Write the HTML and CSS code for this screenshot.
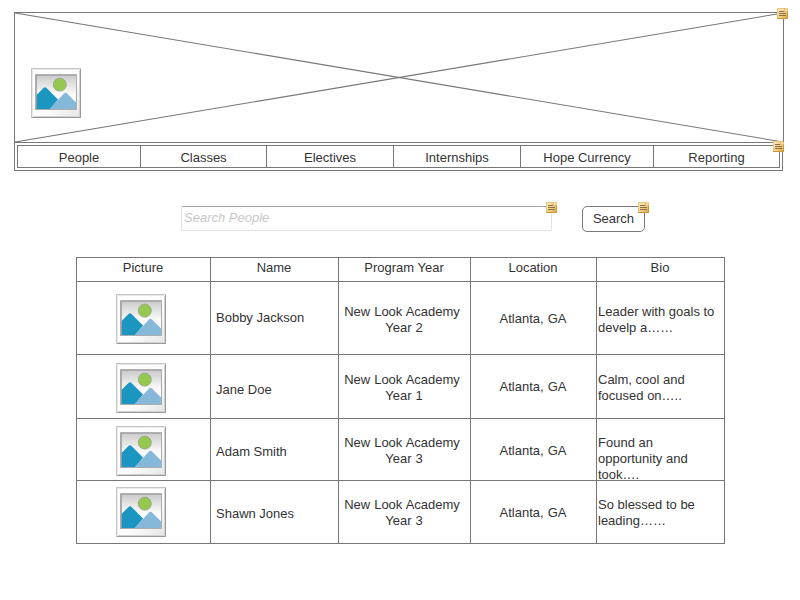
FILE: index.html
```html
<!DOCTYPE html>
<html lang="en">
<head>
<meta charset="utf-8">
<title>People</title>
<link rel="stylesheet" href="styles.css">
</head>
<body>
<svg class="defs" width="0" height="0" aria-hidden="true">
  <defs>
    <linearGradient id="frame" x1="0" y1="0" x2="1" y2="1"><stop offset="0" stop-color="#fff"/><stop offset=".6" stop-color="#fcfcfc"/><stop offset="1" stop-color="#e4e4e4"/></linearGradient>
    <linearGradient id="sky" x1="0" y1="0" x2="0" y2="1"><stop offset="0" stop-color="#c9c9cb"/><stop offset=".55" stop-color="#fafafa"/><stop offset="1" stop-color="#fff"/></linearGradient>
    <linearGradient id="paper" x1="0" y1="0" x2="1" y2="1"><stop offset="0" stop-color="#fdf0cf"/><stop offset=".5" stop-color="#f3d28c"/><stop offset="1" stop-color="#d9a23f"/></linearGradient>
    <symbol id="picture" viewBox="0 0 50 50">
      <rect x=".5" y=".5" width="49" height="49" fill="url(#frame)" stroke="#c6c6c6"/>
      <path d="M1.500 48V1.500H48" fill="none" stroke="#e9e9e9"/>
      <path d="M48.500 2V48.500H2" fill="none" stroke="#d2d2d2"/>
      <path d="M49.500 1V49.500H1" fill="none" stroke="#999"/>
      <rect x="4.500" y="6.500" width="41" height="35" fill="url(#sky)"/>
      <circle cx="28.800" cy="16.600" r="6.500" fill="#95c84e" stroke="#9eaa91"/>
      <path d="M5 27.500 12.500 20Q14 18.500 15.500 20L27 31.500 19 41.500H5Z" fill="#1b96c0"/>
      <path d="M18 41.500 33 25.500Q34.500 24 36 25.500L45.500 35V41.500Z" fill="#86b8d9"/>
      <path d="M5 42V7H46" fill="none" stroke="#a0a0a2" stroke-width="1.700"/>
      <path d="M45.500 7V41.500H4" fill="none" stroke="#aaadaf"/>
    </symbol>
    <symbol id="note" viewBox="0 0 11 11">
      <path d="M0 0H8L11 3V11H0Z" fill="url(#paper)"/>
      <path d="M.5 11V.5H8" fill="none" stroke="#ebc47b"/>
      <path d="M0 10.500H10.500V3" fill="none" stroke="#cf9636"/>
      <path d="M7.500 0V3.500H11L10.500 .5Z" fill="#f8dfa3" stroke="#d9aa58" stroke-width=".6"/>
      <path d="M2 3.500H7M2 5.500H9M2 7.500H9" stroke="#8b7043"/>
    </symbol>
  </defs>
</svg>

<div class="top">
  <header class="banner">
    <svg class="cross" viewBox="0 0 768 129" preserveAspectRatio="none"><path d="M0 0 768 129M0 129 768 0"/></svg>
    <svg class="picture logo"><use href="#picture"/></svg>
    <svg class="note"><use href="#note"/></svg>
  </header>
  <nav class="menu">
    <div class="items">
      <a>People</a><a>Classes</a><a>Electives</a><a>Internships</a><a>Hope Currency</a><a>Reporting</a>
    </div>
    <svg class="note menu-note"><use href="#note"/></svg>
  </nav>
</div>

<div class="search">
  <div class="field"><input type="text" placeholder="Search People"><svg class="note"><use href="#note"/></svg></div>
  <div class="action"><button>Search</button><svg class="note"><use href="#note"/></svg></div>
</div>

<main class="people">
  <div class="row head"><div>Picture</div><div>Name</div><div>Program Year</div><div>Location</div><div>Bio</div></div>
  <div class="row first">
    <div class="pic"><svg class="picture"><use href="#picture"/></svg></div>
    <div class="name">Bobby Jackson</div>
    <div class="program">New Look Academy&nbsp;<br>Year 2</div>
    <div class="place">Atlanta, GA</div>
    <div class="bio">Leader with goals to<br>develp a……</div>
  </div>
  <div class="row second">
    <div class="pic"><svg class="picture"><use href="#picture"/></svg></div>
    <div class="name">Jane Doe</div>
    <div class="program">New Look Academy&nbsp;<br>Year 1</div>
    <div class="place">Atlanta, GA</div>
    <div class="bio">Calm, cool and<br>focused on…..</div>
  </div>
  <div class="row third">
    <div class="pic"><svg class="picture"><use href="#picture"/></svg></div>
    <div class="name">Adam Smith</div>
    <div class="program">New Look Academy&nbsp;<br>Year 3</div>
    <div class="place">Atlanta, GA</div>
    <div class="bio">Found an<br>opportunity and<br>took….</div>
  </div>
  <div class="row fourth">
    <div class="pic"><svg class="picture"><use href="#picture"/></svg></div>
    <div class="name">Shawn Jones</div>
    <div class="program">New Look Academy&nbsp;<br>Year 3</div>
    <div class="place">Atlanta, GA</div>
    <div class="bio">So blessed to be<br>leading……</div>
  </div>
</main>
</body>
</html>
```
FILE: styles.css
```css
* { box-sizing: border-box; }
body {
  margin: 0;
  padding: 12px 0 0 14px;
  background: #fff;
  color: #333;
  font: 13px/16px "Liberation Sans", Arial, sans-serif;
}
svg { display: block; }
.defs { position: absolute; }
.picture { width: 50px; height: 50px; }
.note { position: absolute; width: 11px; height: 11px; top: -4px; right: -6px; }

.banner {
  position: relative;
  width: 770px;
  height: 131px;
  padding: 55px 0 0 16px;
  border: 1px solid #777;
}
.cross { position: absolute; inset: 0; width: 768px; height: 129px; }
.cross path { fill: none; stroke: #777; stroke-width: 1.1; }
.logo { position: relative; }
.banner .note { top: -5px; right: -5px; }

.menu {
  position: relative;
  width: 769px;
  height: 28px;
  padding: 2px;
  border: 1px solid #777;
  border-top: 0;
}
.items {
  display: grid;
  grid-template-columns: 123px 126px 127px 127px 133px 126px;
  width: 763px;
  height: 23px;
  border: 1px solid #777;
  border-right: 0;
}
.items a { padding-top: 4px; border-right: 1px solid #777; text-align: center; }
.menu .menu-note { top: -2px; right: -2px; }

.search { display: flex; gap: 30px; margin: 35px 0 0 167px; }
.field, .action { position: relative; }
.field { width: 371px; }
.field input {
  display: block;
  width: 371px;
  height: 25px;
  padding: 0 2px 3px;
  border: 1px solid #dde3e3;
  border-top-color: #a5a5a5;
  border-radius: 2px;
  font: inherit;
  outline: 0;
}
.field input::placeholder { color: #c8c8c8; font-style: italic; opacity: 1; }
.action button {
  display: block;
  width: 63px;
  height: 26px;
  padding: 0;
  border: 1px solid #777;
  border-radius: 5px;
  background: #fff;
  color: #333;
  font: inherit;
}
.field .note, .action .note { right: auto; }
.field .note { left: 365px; }
.action .note { left: 56px; }

.people {
  width: 649px;
  margin: 25px 0 0 62px;
  border: solid #777;
  border-width: 1px 0 0 1px;
}
.row { display: grid; grid-template-columns: 134px 128px 132px 126px 128px; }
.row > div { overflow: hidden; border: solid #777; border-width: 0 1px 1px 0; }
.head { height: 24px; text-align: center; }
.head > div { padding: 2px 1px 0 0; }
.first { height: 73px; }
.second { height: 64px; }
.third { height: 62px; }
.fourth { height: 63px; }
.pic { padding-left: 39px; }
.row .name { padding-left: 5px; }
.program, .place { padding-right: 1px; text-align: center; word-spacing: .4px; }
.row .bio { padding-left: 1px; }

.first .pic { padding-top: 12px; }
.first .name { padding-top: 28px; }
.first .program, .first .bio { padding-top: 22px; }
.first .place { padding-top: 29px; }
.second .pic { padding-top: 8px; }
.second .name { padding-top: 27px; }
.second .program, .second .bio { padding-top: 17px; }
.second .place { padding-top: 24px; }
.third .pic { padding-top: 7px; }
.third .name { padding-top: 25px; }
.third .program, .third .bio { padding-top: 16px; }
.third .place { padding-top: 24px; }
.fourth .pic { padding-top: 6px; }
.fourth .name { padding-top: 25px; }
.fourth .program, .fourth .bio { padding-top: 16px; }
.fourth .place { padding-top: 24px; }
```
